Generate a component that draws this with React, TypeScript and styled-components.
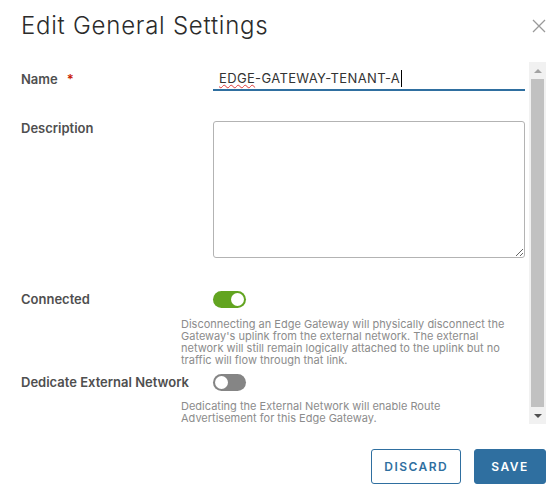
import React from 'react';
import styled, { createGlobalStyle } from 'styled-components';

const GlobalStyle = createGlobalStyle`
  html, body {
    margin: 0;
    padding: 0;
    background: #ffffff;
  }
  body {
    font-family: Inter, "Open Sans", "Liberation Sans", sans-serif;
    color: #333333;
  }
  * {
    box-sizing: border-box;
  }
`;

const Dialog = styled.div`
  width: 560px;
  height: 497px;
  padding: 0 14px 0 21px;
  display: flex;
  flex-direction: column;
  background: #fff;
`;

const Header = styled.div`
  height: 62px;
  display: flex;
  align-items: flex-start;
  justify-content: space-between;
`;

const Title = styled.h3`
  margin: 11px 0 0 0;
  font-size: 24px;
  line-height: 30px;
  font-weight: 300;
  letter-spacing: 0.75px;
  color: #2b2b2b;
`;

const CloseButton = styled.button`
  margin-top: 19px;
  width: 14px;
  height: 14px;
  padding: 0;
  border: none;
  background: none;
  cursor: pointer;
  display: flex;
`;

const Body = styled.div`
  height: 362px;
  display: flex;
`;

const Content = styled.div`
  flex: 1;
  overflow: hidden;
`;

const Scrollbar = styled.div`
  width: 17px;
  background: #f1f1f1;
  display: flex;
  flex-direction: column;
`;

const ScrollButton = styled.div<{ $down?: boolean }>`
  height: 17px;
  display: flex;
  align-items: center;
  justify-content: center;

  &::after {
    content: '';
    width: 0;
    height: 0;
    border-left: 4px solid transparent;
    border-right: 4px solid transparent;
    ${(p) =>
      p.$down
        ? 'border-top: 4px solid #505050;'
        : 'border-bottom: 4px solid #a3a3a3;'}
  }
`;

const Thumb = styled.div`
  flex: 1;
  margin: 0 2px;
  background: #c1c1c1;
`;

const Form = styled.form`
  padding: 5px 4px 0 0;
  display: flex;
  flex-direction: column;
`;

const FieldRow = styled.div<{ $top: number; $align?: string }>`
  display: grid;
  grid-template-columns: 192px 1fr;
  align-items: ${(p) => p.$align || 'center'};
  margin-top: ${(p) => p.$top}px;
`;

const Label = styled.label<{ $shift?: number }>`
  font-size: 13px;
  font-weight: 600;
  line-height: 20px;
  color: #4f4f4f;
  white-space: nowrap;
  margin-top: ${(p) => p.$shift || 0}px;
`;

const Required = styled.span`
  color: #c92100;
  margin-left: 9px;
  font-weight: 600;
`;

const TextBox = styled.div`
  height: 24px;
  padding: 0 6px;
  border-bottom: 2px solid #2f6fa0;
  font-size: 13px;
  line-height: 22px;
  letter-spacing: 0.35px;
  color: #333;
  display: flex;
  align-items: center;
`;

const Misspelled = styled.span`
  text-decoration: underline wavy #e23c3c;
  text-decoration-thickness: 1px;
  text-underline-offset: 1px;
  text-decoration-skip-ink: none;
`;

const Caret = styled.span`
  display: inline-block;
  width: 1px;
  height: 17px;
  background: #000;
  margin-left: 1px;
`;

const TextArea = styled.textarea`
  height: 137px;
  width: 100%;
  margin: 0;
  border: 1px solid #b3b3b3;
  border-radius: 3px;
  resize: vertical;
  font-family: inherit;
  font-size: 13px;
  outline: none;
`;

const Toggle = styled.button<{ $on?: boolean }>`
  width: 33px;
  height: 17px;
  border-radius: 9px;
  border: none;
  background: ${(p) => (p.$on ? '#62a420' : '#858585')};
  display: flex;
  align-items: center;
  justify-content: ${(p) => (p.$on ? 'flex-end' : 'flex-start')};
  padding: 0 2px;
  cursor: pointer;
`;

const Knob = styled.span`
  width: 13px;
  height: 13px;
  border-radius: 50%;
  background: #fff;
`;

const Help = styled.p<{ $top: number }>`
  margin: ${(p) => p.$top}px 0 0 160px;
  font-size: 11px;
  line-height: 12px;
  color: #8c8c8c;
`;

const Footer = styled.div`
  margin-top: 25px;
  display: flex;
  justify-content: flex-end;
  gap: 13px;
`;

const Button = styled.button<{ $primary?: boolean }>`
  height: 35px;
  min-width: 72px;
  padding: 0 12px;
  border-radius: 3px;
  border: 1px solid #2f6fa0;
  background: ${(p) => (p.$primary ? '#2f6fa0' : '#fff')};
  color: ${(p) => (p.$primary ? '#fff' : '#2f6fa0')};
  font-family: inherit;
  font-size: 12px;
  font-weight: 600;
  letter-spacing: 0.12em;
  cursor: pointer;
`;

const App: React.FC = () => {
  return (
    <>
      <GlobalStyle />
      <Dialog>
        <Header>
          <Title>Edit General Settings</Title>
          <CloseButton aria-label="Close">
            <svg width="14" height="14" viewBox="0 0 14 14">
              <path d="M1 1L13 13M13 1L1 13" stroke="#9a9a9a" strokeWidth="1.3" fill="none" />
            </svg>
          </CloseButton>
        </Header>
        <Body>
          <Content>
            <Form>
              <FieldRow $top={0}>
                <Label>
                  Name<Required>*</Required>
                </Label>
                <TextBox role="textbox">
                  <Misspelled>EDGE</Misspelled>-GATEWAY-TENANT-A
                  <Caret />
                </TextBox>
              </FieldRow>
              <FieldRow $top={30} $align="start">
                <Label $shift={-3}>Description</Label>
                <TextArea />
              </FieldRow>
              <FieldRow $top={31}>
                <Label>Connected</Label>
                <Toggle $on type="button">
                  <Knob />
                </Toggle>
              </FieldRow>
              <Help $top={9}>
                Disconnecting an Edge Gateway will physically disconnect the
                <br />
                Gateway's uplink from the external network. The external
                <br />
                network will still remain logically attached to the uplink but no
                <br />
                traffic will flow through that link.
              </Help>
              <FieldRow $top={6}>
                <Label>Dedicate External Network</Label>
                <Toggle type="button">
                  <Knob />
                </Toggle>
              </FieldRow>
              <Help $top={8}>
                Dedicating the External Network will enable Route
                <br />
                Advertisement for this Edge Gateway.
              </Help>
            </Form>
          </Content>
          <Scrollbar>
            <ScrollButton />
            <Thumb />
            <ScrollButton $down />
          </Scrollbar>
        </Body>
        <Footer>
          <Button type="button">DISCARD</Button>
          <Button type="button" $primary>
            SAVE
          </Button>
        </Footer>
      </Dialog>
    </>
  );
};

export default App;
